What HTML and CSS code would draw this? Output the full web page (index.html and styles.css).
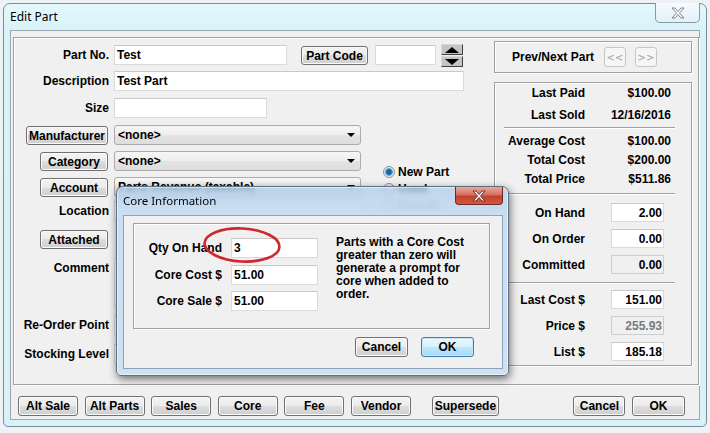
FILE: index.html
```html
<!DOCTYPE html>
<html lang="en">
<head>
    <meta charset="UTF-8">
    <title>Edit Part</title>
    <link rel="stylesheet" href="styles.css">
</head>
<body>
    <div class="window">
        <div class="titlebar">
            <span class="title">Edit Part</span>
            <div class="win-close">
                <svg width="14" height="12" viewBox="0 0 14 12"><polygon points="1,1 4,1 7,4.5 10,1 13,1 8.5,6 13,11 10,11 7,7.5 4,11 1,11 5.5,6" fill="#fbfdfe" stroke="#7c858c" stroke-width="1"/></svg>
            </div>
        </div>

        <div class="client">
            <div class="panel">
                <div class="form">
                    <span class="lbl">Part No.</span>
                    <div class="field-row">
                        <input class="txt part-no" value="Test">
                        <button class="btn part-code">Part Code</button>
                        <input class="txt code">
                        <div class="spinner">
                            <span class="spin-btn"><i class="tri-up"></i></span>
                            <span class="spin-btn"><i class="tri-down"></i></span>
                        </div>
                    </div>

                    <span class="lbl">Description</span>
                    <div class="field-row"><input class="txt desc" value="Test Part"></div>

                    <span class="lbl">Size</span>
                    <div class="field"><input class="txt size"></div>

                    <button class="btn lbl-btn wide-btn">Manufacturer</button>
                    <div class="field combo"><span>&lt;none&gt;</span><i class="arrow"></i></div>

                    <button class="btn lbl-btn">Category</button>
                    <div class="field combo"><span>&lt;none&gt;</span><i class="arrow"></i></div>

                    <button class="btn lbl-btn">Account</button>
                    <div class="field combo"><span>Parts Revenue (taxable)</span><i class="arrow"></i></div>

                    <span class="lbl">Location</span>
                    <div class="field"><input class="txt full"></div>

                    <button class="btn lbl-btn">Attached</button>
                    <div class="field"></div>

                    <span class="lbl">Comment</span>
                    <div class="field"><div class="memo"></div></div>

                    <span class="lbl">Re-Order Point</span>
                    <div class="field"><input class="txt small"></div>

                    <span class="lbl">Stocking Level</span>
                    <div class="field"><input class="txt small"></div>

                    <div class="radios">
                        <label class="radio-row"><span class="radio checked"></span>New Part</label>
                        <label class="radio-row"><span class="radio"></span>Used</label>
                        <label class="radio-row off"><span class="radio"></span>Rebuilt</label>
                    </div>
                </div>

                <div class="side">
                    <div class="box nav">
                        <span class="nav-label">Prev/Next Part</span>
                        <button class="nav-btn">&lt;&lt;</button>
                        <button class="nav-btn">&gt;&gt;</button>
                    </div>

                    <div class="box info">
                        <div class="stats first">
                            <div class="stat"><span class="k">Last Paid</span><span class="v">$100.00</span></div>
                            <div class="stat"><span class="k">Last Sold</span><span class="v">12/16/2016</span></div>
                        </div>
                        <div class="sep"></div>
                        <div class="stats mid">
                            <div class="stat"><span class="k">Average Cost</span><span class="v">$100.00</span></div>
                            <div class="stat"><span class="k">Total Cost</span><span class="v">$200.00</span></div>
                            <div class="stat"><span class="k">Total Price</span><span class="v">$511.86</span></div>
                        </div>
                        <div class="sep"></div>
                        <div class="qtys stock">
                            <div class="qty"><span class="k">On Hand</span><input class="txt num" value="2.00"></div>
                            <div class="qty"><span class="k">On Order</span><input class="txt num" value="0.00"></div>
                            <div class="qty"><span class="k">Committed</span><input class="txt num ro" value="0.00" readonly></div>
                        </div>
                        <div class="sep"></div>
                        <div class="qtys">
                            <div class="qty"><span class="k">Last Cost $</span><input class="txt num" value="151.00"></div>
                            <div class="qty"><span class="k">Price $</span><input class="txt num ro grey" value="255.93" readonly></div>
                            <div class="qty"><span class="k">List $</span><input class="txt num" value="185.18"></div>
                        </div>
                    </div>
                </div>
            </div>

            <div class="actions">
                <button class="btn act">Alt Sale</button>
                <button class="btn act">Alt Parts</button>
                <button class="btn act">Sales</button>
                <button class="btn act">Core</button>
                <button class="btn act">Fee</button>
                <button class="btn act">Vendor</button>
                <button class="btn act supersede">Supersede</button>
                <button class="btn act cancel">Cancel</button>
                <button class="btn act ok">OK</button>
            </div>
        </div>
    </div>

    <div class="dialog">
        <div class="dlg-titlebar">
            <span class="dlg-title">Core Information</span>
            <div class="dlg-close">
                <svg width="14" height="12" viewBox="0 0 14 12"><polygon points="1,1 4,1 7,4.5 10,1 13,1 8.5,6 13,11 10,11 7,7.5 4,11 1,11 5.5,6" fill="#ffffff" stroke="#6e2a20" stroke-width="1"/></svg>
            </div>
        </div>
        <div class="dlg-client">
            <div class="box dlg-group">
                <span class="lbl">Qty On Hand</span>
                <input class="txt core-in" value="3">
                <span class="lbl">Core Cost $</span>
                <input class="txt core-in" value="51.00">
                <span class="lbl">Core Sale $</span>
                <input class="txt core-in" value="51.00">
                <p class="note">Parts with a Core Cost greater than zero will generate a prompt for core when added to order.</p>
            </div>
            <div class="dlg-actions">
                <button class="btn dlg-btn">Cancel</button>
                <button class="btn dlg-btn default">OK</button>
            </div>
        </div>
    </div>

    <svg class="mark" width="82" height="38" viewBox="0 0 82 38">
        <ellipse cx="41" cy="19" rx="37.5" ry="16.5" fill="none" stroke="#d0262c" stroke-width="2.6" transform="rotate(3 41 19)"/>
    </svg>
</body>
</html>
```

FILE: styles.css
```css
body {
    margin: 0;
    width: 710px;
    height: 433px;
    overflow: hidden;
    background: #eef2f5;
    font-family: "Liberation Sans", Arial, sans-serif;
    font-size: 12px;
    font-weight: bold;
    color: #000;
}

/* main window */
.window {
    width: 704px;
    height: 424px;
    margin: 3px 0 0 3px;
    box-sizing: border-box;
    border: 1px solid #7b8b98;
    border-radius: 7px 7px 5px 5px;
    background: linear-gradient(#e3f9fd, #d8f2f8 26px, #d9f1f7);
    padding: 0 6px 6px 6px;
    display: flex;
    flex-direction: column;
}

.titlebar {
    height: 26px;
    display: flex;
    align-items: flex-start;
}

.title {
    margin: 5px 0 0 0;
    line-height: 16px;
    font-family: "Noto Sans", "Open Sans", sans-serif;
    font-weight: normal;
    font-size: 12px;
}

.win-close {
    width: 45px;
    height: 20px;
    margin: -1px 0 0 auto;
    box-sizing: border-box;
    border: 1px solid #8a99a6;
    border-top: none;
    border-radius: 0 0 5px 5px;
    background: linear-gradient(#f6fcfe, #e2f1f6);
    display: flex;
    align-items: center;
    justify-content: center;
}

.client {
    flex: 1;
    background: #f0f0f0;
    border: 1px solid #9ba7b1;
}

.box {
    box-sizing: border-box;
    border: 1px solid #a0a0a0;
    box-shadow: inset 1px 1px 0 #fff, 1px 1px 0 #fff;
}

.panel {
    width: 686px;
    height: 348px;
    margin: 6px 0 0 2px;
    box-sizing: border-box;
    border: 1px solid #a0a0a0;
    box-shadow: inset 1px 1px 0 #fff, 1px 1px 0 #fff;
    padding-right: 6px;
    display: flex;
}

/* controls */
.txt {
    box-sizing: border-box;
    height: 20px;
    margin: 0;
    padding: 0 2px;
    border: 1px solid #dadada;
    border-top-color: #c9c9c9;
    background: #fff;
    font: bold 12px "Liberation Sans", Arial, sans-serif;
    color: #000;
    outline: none;
}

.btn {
    box-sizing: border-box;
    height: 20px;
    margin: 0;
    padding: 0;
    border: 1px solid #707070;
    border-radius: 3px;
    background: linear-gradient(#f3f3f3, #ebebeb 50%, #dddddd 50%, #cfcfcf);
    box-shadow: inset 0 0 0 1px #fbfbfb;
    font: bold 12px "Liberation Sans", Arial, sans-serif;
    color: #000;
}

.combo {
    box-sizing: border-box;
    width: 247px;
    height: 20px;
    padding: 0 5px 0 3px;
    border: 1px solid #acacac;
    border-radius: 3px;
    background: linear-gradient(#f6f6f6, #eeeeee 50%, #e4e4e4 50%, #dddddd);
    display: flex;
    align-items: center;
    line-height: 18px;
}

.combo span {
    flex: 1;
}

.arrow {
    width: 0;
    height: 0;
    border-left: 4px solid transparent;
    border-right: 4px solid transparent;
    border-top: 4px solid #000;
}

/* left form */
.form {
    flex: none;
    width: 476px;
    display: grid;
    grid-template-columns: 95px 247px 124px;
    grid-template-rows: 26px 27px 27px 26px 26px 24px 28px 29px 57px 29px 20px;
    column-gap: 5px;
    padding-top: 7px;
    align-content: start;
    box-sizing: border-box;
}

.form .lbl,
.form .lbl-btn {
    grid-column: 1;
}

.form .field {
    grid-column: 2;
}

.lbl {
    text-align: right;
    line-height: 20px;
    white-space: nowrap;
}

.lbl-btn {
    justify-self: end;
    width: 68px;
    height: 19px;
    margin: 1px 1px 0 0;
}

.wide-btn {
    width: 82px;
}

.field-row {
    grid-column: 2 / 4;
    display: flex;
    align-items: flex-start;
}

.part-no {
    width: 173px;
}

.part-code {
    width: 67px;
    height: 19px;
    margin: 1px 0 0 14px;
}

.code {
    width: 61px;
    margin-left: 7px;
}

.spinner {
    margin: -1px 0 0 5px;
    display: flex;
    flex-direction: column;
    gap: 1px;
}

.spin-btn {
    box-sizing: border-box;
    width: 22px;
    height: 11px;
    border: 1px solid #d8d8d8;
    border-right-color: #404040;
    border-bottom-color: #404040;
    background: #c4c4c4;
    display: flex;
    align-items: center;
    justify-content: center;
}

.tri-up {
    border-left: 7px solid transparent;
    border-right: 7px solid transparent;
    border-bottom: 6px solid #000;
}

.tri-down {
    border-left: 7px solid transparent;
    border-right: 7px solid transparent;
    border-top: 6px solid #000;
}

.desc {
    width: 350px;
}

.size {
    width: 153px;
}

.full {
    width: 247px;
}

.small {
    width: 70px;
}

.memo {
    width: 247px;
    height: 48px;
    box-sizing: border-box;
    border: 1px solid #dadada;
    background: #fff;
}

.radios {
    grid-column: 3;
    grid-row: 5 / 8;
    padding: 12px 0 0 17px;
}

.radio-row {
    height: 17px;
    display: flex;
    align-items: center;
}

.radio-row.off {
    color: #8d8d8d;
}

.radio {
    box-sizing: border-box;
    width: 12px;
    height: 12px;
    margin-right: 3px;
    border: 1px solid #8e8f8f;
    border-radius: 50%;
    background: radial-gradient(circle, #f4f4f4 0 3px, #e2e2e2 5px);
}

.radio.checked {
    background: radial-gradient(circle, #1e62a0 0 2px, #4ea4d8 3.5px, #dcecf6 4.2px, #eeeeee);
}

/* right column */
.side {
    width: 198px;
    margin-left: 4px;
    padding-top: 3px;
}

.nav {
    height: 32px;
    padding: 0 34px 0 17px;
    display: flex;
    align-items: center;
}

.nav-label {
    flex: 1;
    white-space: nowrap;
}

.nav-btn {
    box-sizing: border-box;
    flex: none;
    width: 22px;
    height: 20px;
    padding: 0;
    border: 1px solid #c6c6c6;
    border-radius: 3px;
    background: #f6f6f6;
    font: normal 10px "DejaVu Sans", sans-serif;
    color: #a0a0a0;
}

.nav-btn + .nav-btn {
    margin-left: 9px;
}

.info {
    height: 284px;
    margin-top: 9px;
}

.stats.first {
    display: flex;
    flex-direction: column;
    gap: 2px;
    margin-bottom: 2px;
}

.stats.first .stat {
    height: 20px;
    line-height: 20px;
}

.stats.mid {
    margin: 3px 0 4px;
}

.stats.mid .stat {
    height: 19px;
    line-height: 19px;
}

.stat {
    display: flex;
}

.k {
    width: 90px;
    flex: none;
    text-align: right;
    white-space: nowrap;
}

.v {
    flex: 1;
    padding-right: 20px;
    text-align: right;
}

.sep {
    margin: 0 16px 0 9px;
    border-top: 1px solid #a0a0a0;
    border-bottom: 1px solid #fff;
}

.qtys {
    display: flex;
    flex-direction: column;
    gap: 7px;
    margin-top: 6px;
}

.qtys.stock {
    margin: 8px 0;
}

.qty {
    height: 19px;
    display: flex;
    align-items: center;
}

.num {
    width: 53px;
    height: 19px;
    margin-left: 26px;
    padding: 0 1px 0 0;
    text-align: right;
}

.num.ro {
    background: #f0f0f0;
    border-color: #cdcdcd;
}

.num.grey {
    color: #7a7a7a;
}

/* bottom buttons */
.actions {
    margin-top: 11px;
    padding: 0 14px 0 7px;
    display: flex;
    gap: 6.6px;
}

.act {
    width: 60px;
}

.supersede {
    width: 67px;
    margin-left: 14.4px;
}

.cancel {
    width: 52px;
    margin-left: auto;
}

.ok {
    width: 53px;
}

/* core information dialog */
.dialog {
    position: absolute;
    left: 116px;
    top: 186px;
    width: 393px;
    height: 190px;
    box-sizing: border-box;
    border: 1px solid #5e6f80;
    border-radius: 7px 7px 5px 5px;
    background: linear-gradient(rgba(178, 206, 234, 0.78), rgba(196, 219, 242, 0.9) 28px, #c9def2 29px, #cfe1f3);
    backdrop-filter: blur(2px);
    box-shadow: 1px 3px 9px rgba(0, 0, 0, 0.55), inset 0 0 0 1px rgba(255, 255, 255, 0.55);
    padding: 0 5px 6px 6px;
    display: flex;
    flex-direction: column;
}

.dlg-titlebar {
    height: 28px;
    display: flex;
    align-items: flex-start;
}

.dlg-title {
    margin-top: 6px;
    line-height: 16px;
    font-family: "Noto Sans", "Open Sans", sans-serif;
    font-weight: normal;
    font-size: 11.5px;
}

.dlg-close {
    width: 48px;
    height: 18px;
    margin-left: auto;
    box-sizing: border-box;
    border: 1px solid #6f2a22;
    border-top: none;
    border-radius: 0 0 4px 4px;
    background: linear-gradient(#e9a99b, #d7705f 45%, #c4412e 55%, #d05a3f);
    display: flex;
    align-items: center;
    justify-content: center;
}

.dlg-client {
    flex: 1;
    background: #f0f0f0;
    border: 1px solid #8ea3b7;
}

.dlg-group {
    width: 357px;
    height: 106px;
    margin: 7px 0 0 9px;
    padding-top: 14px;
    display: grid;
    grid-template-columns: 88px 87px 1fr;
    grid-template-rows: 20px 20px 20px;
    column-gap: 9px;
    row-gap: 6.5px;
}

.dlg-group .lbl {
    grid-column: 1;
}

.core-in {
    grid-column: 2;
    width: 87px;
}

.note {
    grid-column: 3;
    grid-row: 1 / 4;
    margin: -2px 0 0 9px;
    width: 140px;
    line-height: 13px;
}

.dlg-actions {
    margin-top: 8px;
    padding-right: 28px;
    display: flex;
    justify-content: flex-end;
    gap: 13px;
}

.dlg-btn {
    width: 53px;
}

.dlg-btn.default {
    border-color: #3c7fb1;
    background: linear-gradient(#eaf6fd, #d9f0fc 50%, #bee6fd 50%, #a7d9f5);
    box-shadow: inset 0 0 0 1px #c6e6f8;
}

.mark {
    position: absolute;
    left: 201px;
    top: 226px;
}
```
